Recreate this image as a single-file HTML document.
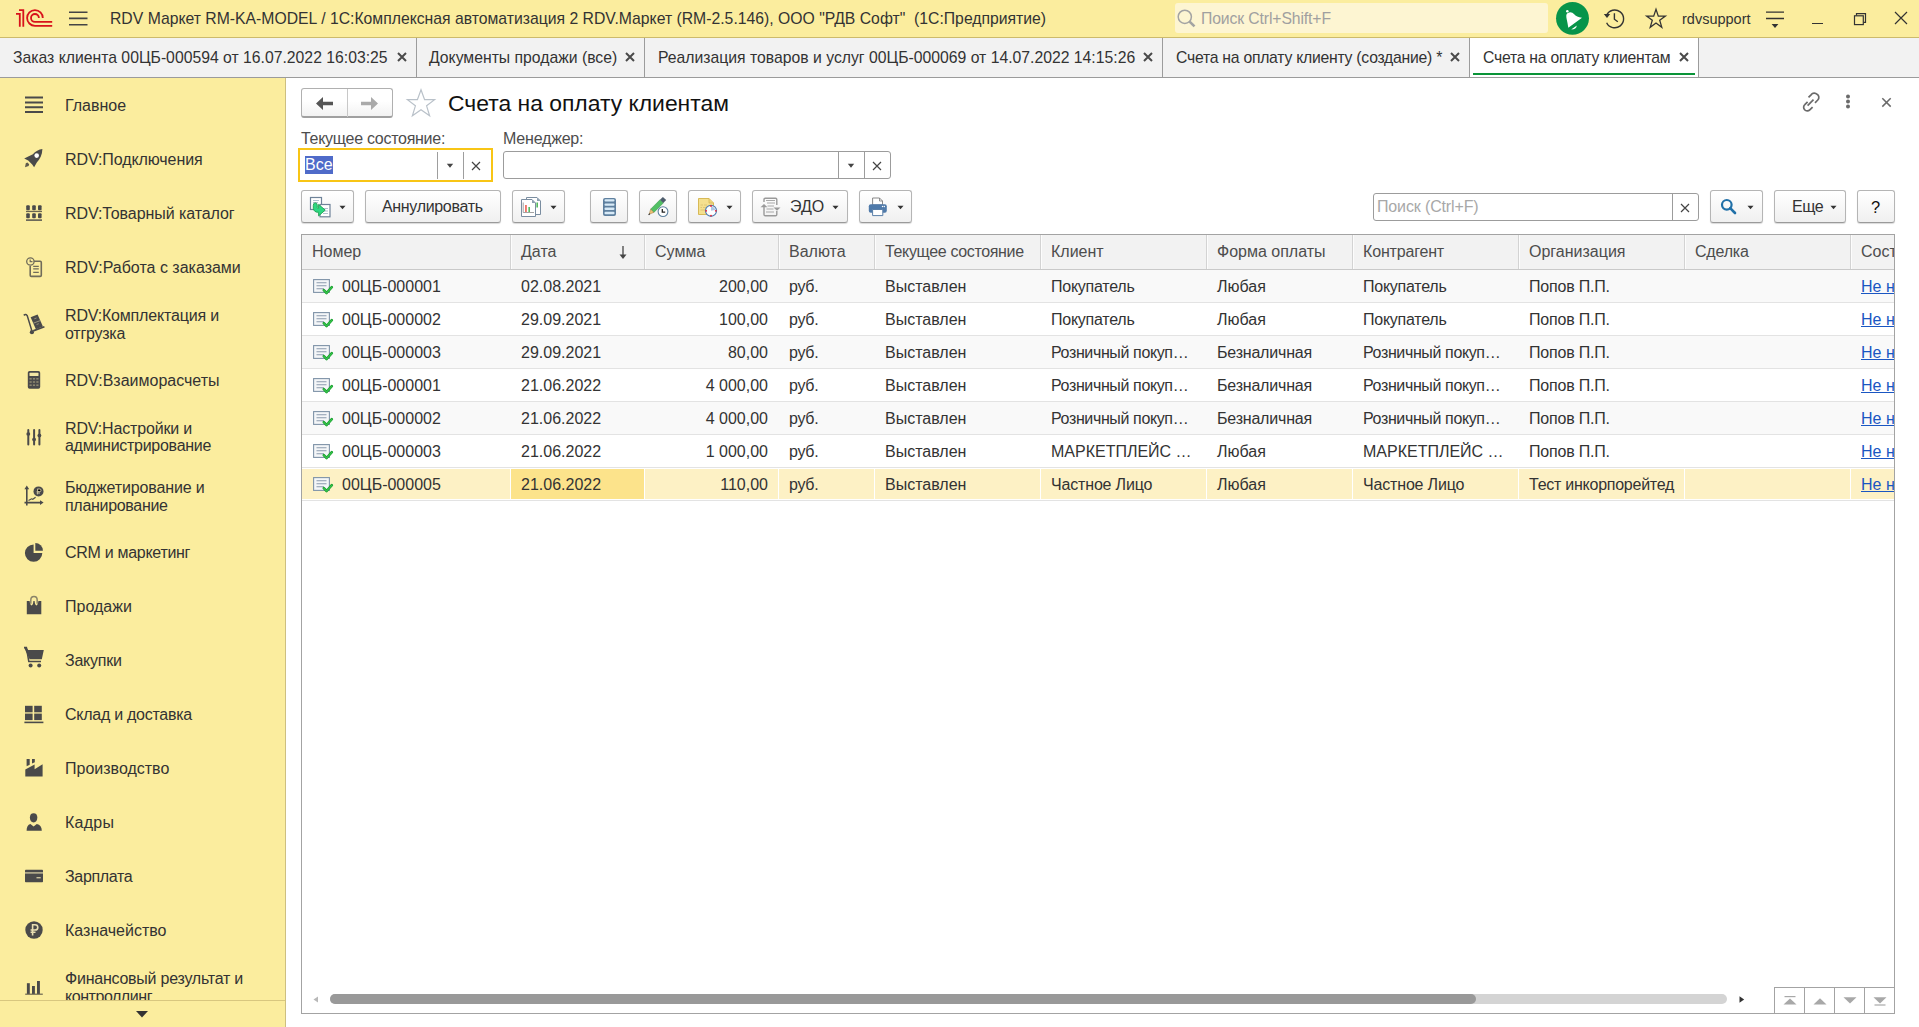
<!DOCTYPE html>
<html><head><meta charset="utf-8">
<style>
*{box-sizing:border-box;margin:0;padding:0}
html,body{width:1919px;height:1027px;overflow:hidden;background:#fff;font-family:"Liberation Sans",sans-serif;color:#333}
.a{position:absolute}
.t{position:absolute;white-space:nowrap;font-size:16px;line-height:18px;height:18px}
#top{left:0;top:0;width:1919px;height:38px;background:#FBED9E;border-bottom:1px solid #CCBA6C}
#tabs{left:0;top:38px;width:1919px;height:40px;background:#F2F2F2;border-bottom:1px solid #9B9B9B}
.tab{position:absolute;top:0;height:39px;border-right:2px solid #9E9E9E}
#side{left:0;top:78px;width:286px;height:949px;background:#FBED9E;border-right:1px solid #CDBF80}
.si{position:absolute;left:65px;font-size:16px;line-height:18px;white-space:nowrap;color:#333}
.ic{position:absolute;left:25px}
.btn{position:absolute;top:190px;height:33px;border:1px solid #B5B5B5;border-bottom-color:#9A9A9A;border-radius:3px;background:linear-gradient(#FFFFFF,#F0F0F0);box-shadow:0 1px 1px rgba(0,0,0,.15)}
.hd{position:absolute;top:235px;height:34px;background:#F2F2F2}
.hs{position:absolute;top:235px;width:1px;height:34px;background:#D6D6D6}
.row{position:absolute;left:302px;width:1592px;height:33px}
</style></head><body>

<!-- TOP BAR -->
<div id="top" class="a">
  <svg class="a" style="left:12px;top:5px" width="45" height="25" viewBox="0 0 45 25" fill="none" stroke="#D8121B" stroke-width="1.8">
    <path d="M7 5.2H11.3V21.8M4 8.9H7.8V21.8"/>
    <path d="M30.8 12.95A7.85 7.85 0 1 0 22.95 20.8H40.2M26.9 12.95A3.95 3.95 0 1 0 22.95 16.9H40.2"/>
  </svg>
  <svg class="a" style="left:69px;top:10px" width="19" height="17" viewBox="0 0 19 17" stroke="#444" stroke-width="1.6">
    <path d="M0 2.3H18.5M0 8.4H18.5M0 14.8H18.5"/>
  </svg>
  <div class="t" style="left:110px;top:10px;font-size:15.75px;color:#333">RDV Маркет RM-KA-MODEL / 1С:Комплексная автоматизация 2 RDV.Маркет (RM-2.5.146), ООО "РДВ Софт"&nbsp; (1С:Предприятие)</div>
</div>

<!-- TABS -->
<div id="tabs" class="a">
<div class="a" style="left:0px;top:0;width:416px;height:39px;background:transparent"></div>
<div class="a" style="left:416px;top:0;width:1px;height:39px;background:#9C9C9C"></div>
<div class="t" style="left:13px;top:11px;font-size:15.75px">Заказ клиента 00ЦБ-000594 от 16.07.2022 16:03:25</div>
<svg class="a" style="left:397px;top:14px" width="10" height="10" viewBox="0 0 10 10" stroke="#4a4a4a" stroke-width="2"><path d="M1 1L9 9M9 1L1 9"/></svg>
<div class="a" style="left:417px;top:0;width:227px;height:39px;background:transparent"></div>
<div class="a" style="left:644px;top:0;width:1px;height:39px;background:#9C9C9C"></div>
<div class="t" style="left:429px;top:11px;font-size:15.75px">Документы продажи (все)</div>
<svg class="a" style="left:625px;top:14px" width="10" height="10" viewBox="0 0 10 10" stroke="#4a4a4a" stroke-width="2"><path d="M1 1L9 9M9 1L1 9"/></svg>
<div class="a" style="left:645px;top:0;width:517px;height:39px;background:transparent"></div>
<div class="a" style="left:1162px;top:0;width:1px;height:39px;background:#9C9C9C"></div>
<div class="t" style="left:658px;top:11px;font-size:15.75px">Реализация товаров и услуг 00ЦБ-000069 от 14.07.2022 14:15:26</div>
<svg class="a" style="left:1143px;top:14px" width="10" height="10" viewBox="0 0 10 10" stroke="#4a4a4a" stroke-width="2"><path d="M1 1L9 9M9 1L1 9"/></svg>
<div class="a" style="left:1163px;top:0;width:306px;height:39px;background:transparent"></div>
<div class="a" style="left:1469px;top:0;width:1px;height:39px;background:#9C9C9C"></div>
<div class="t" style="left:1176px;top:11px;font-size:15.75px;letter-spacing:-0.25px">Счета на оплату клиенту (создание) *</div>
<svg class="a" style="left:1450px;top:14px" width="10" height="10" viewBox="0 0 10 10" stroke="#4a4a4a" stroke-width="2"><path d="M1 1L9 9M9 1L1 9"/></svg>
<div class="a" style="left:1470px;top:0;width:228px;height:39px;background:#fff"></div>
<div class="a" style="left:1698px;top:0;width:1px;height:39px;background:#9C9C9C"></div>
<div class="t" style="left:1483px;top:11px;font-size:15.75px;letter-spacing:-0.25px">Счета на оплату клиентам</div>
<svg class="a" style="left:1679px;top:14px" width="10" height="10" viewBox="0 0 10 10" stroke="#4a4a4a" stroke-width="2"><path d="M1 1L9 9M9 1L1 9"/></svg>
<div class="a" style="left:1473px;top:35px;width:222px;height:2px;background:#0A9438"></div>
</div>

<!-- SIDEBAR -->
<div id="side" class="a">
<div class="a" style="left:0;top:0;width:285px;height:922px;overflow:hidden">
<div class="t" style="left:65px;top:19px">Главное</div>
<div class="t" style="left:65px;top:73px;letter-spacing:-0.086px">RDV:Подключения</div>
<div class="t" style="left:65px;top:127px;letter-spacing:-0.074px">RDV:Товарный каталог</div>
<div class="t" style="left:65px;top:181px">RDV:Работа с заказами</div>
<div class="t" style="left:65px;top:229px;letter-spacing:-0.176px">RDV:Комплектация и</div>
<div class="t" style="left:65px;top:247px;letter-spacing:-0.243px">отгрузка</div>
<div class="t" style="left:65px;top:294px">RDV:Взаиморасчеты</div>
<div class="t" style="left:65px;top:342px;letter-spacing:-0.157px">RDV:Настройки и</div>
<div class="t" style="left:65px;top:359px;letter-spacing:-0.275px">администрирование</div>
<div class="t" style="left:65px;top:401px;letter-spacing:-0.147px">Бюджетирование и</div>
<div class="t" style="left:65px;top:419px;letter-spacing:-0.309px">планирование</div>
<div class="t" style="left:65px;top:466px;letter-spacing:-0.293px">CRM и маркетинг</div>
<div class="t" style="left:65px;top:520px">Продажи</div>
<div class="t" style="left:65px;top:574px;letter-spacing:-0.233px">Закупки</div>
<div class="t" style="left:65px;top:628px;letter-spacing:-0.267px">Склад и доставка</div>
<div class="t" style="left:65px;top:682px">Производство</div>
<div class="t" style="left:65px;top:736px;letter-spacing:0.250px">Кадры</div>
<div class="t" style="left:65px;top:790px;letter-spacing:-0.329px">Зарплата</div>
<div class="t" style="left:65px;top:844px">Казначейство</div>
<div class="t" style="left:65px;top:892px;letter-spacing:-0.238px">Финансовый результат и</div>
<div class="t" style="left:65px;top:910px;letter-spacing:-0.45px">контроллинг</div>
</div>
<div class="a" style="left:0;top:922px;width:285px;height:1px;background:#D8C77F"></div>
<svg class="a" style="left:135px;top:932px" width="14" height="8" viewBox="0 0 14 8"><path d="M1 1H13L7 7.5Z" fill="#333"/></svg>
</div>

<!-- MAIN -->
<div class="a" style="left:301px;top:88px;width:92px;height:30px;border:1px solid #B0B0B0;border-bottom:2px solid #A0A0A0;border-radius:3px;background:linear-gradient(#FFFFFF 0%,#FFFFFF 45%,#F2F2F2 100%)"></div>
<div class="a" style="left:347px;top:89px;width:1px;height:28px;background:#C8C8C8"></div>
<svg class="a" style="left:315px;top:96px" width="19" height="15" viewBox="0 0 19 15"><path d="M1 7.5L8 1V5.8H18V9.2H8V14Z" fill="#555"/></svg>
<svg class="a" style="left:360px;top:96px" width="19" height="15" viewBox="0 0 19 15"><path d="M18 7.5L11 1V5.8H1V9.2H11V14Z" fill="#AAAAAA"/></svg>
<svg class="a" style="left:405px;top:88px" width="32" height="30" viewBox="0 0 32 30"><path d="M16 1.8L19.6 11.6L29.6 11.6L21.6 17.8L24.6 27.8L16 21.7L7.4 27.8L10.4 17.8L2.4 11.6L12.4 11.6Z" fill="none" stroke="#B9C1C9" stroke-width="1.2" stroke-linejoin="miter"/></svg>
<div class="t" style="left:448px;top:90px;font-size:22.9px;line-height:26px;height:26px;color:#111">Счета на оплату клиентам</div>
<svg class="a" style="left:1800px;top:91px" width="23" height="22" viewBox="0 0 23 22" fill="none" stroke="#6A6A6A" stroke-width="1.7" stroke-linecap="butt"><path d="M8.5 6.3L11.3 3.6A3.6 3.6 0 0 1 17 3.3A3.6 3.6 0 0 1 17.8 9L15 11.8"/><path d="M7.6 10.8L4.8 13.6A3.6 3.6 0 0 0 4.6 18.7A3.6 3.6 0 0 0 9.8 18.9L12.6 16.1"/><path d="M7.6 14.6L13.5 8.7"/></svg>
<svg class="a" style="left:1844px;top:93px" width="8" height="17" viewBox="0 0 8 17" fill="#6A6A6A"><circle cx="4" cy="3.4" r="2"/><circle cx="4" cy="8.4" r="2"/><circle cx="4" cy="13.6" r="2"/></svg>
<svg class="a" style="left:1881px;top:97px" width="11" height="11" viewBox="0 0 11 11" stroke="#6A6A6A" stroke-width="1.5"><path d="M1.3 1.2L9.7 9.6M9.7 1.2L1.3 9.6"/></svg>
<div class="t" style="left:301px;top:130px;color:#4D4D4D;letter-spacing:-0.28px">Текущее состояние:</div>
<div class="t" style="left:503px;top:130px;color:#4D4D4D;letter-spacing:-0.2px">Менеджер:</div>
<div class="a" style="left:298px;top:148px;width:195px;height:34px;border:2px solid #F8C515;background:#fff"></div>
<div class="a" style="left:437px;top:152px;width:1px;height:27px;background:#9E9E9E"></div>
<div class="a" style="left:463px;top:152px;width:1px;height:27px;background:#9E9E9E"></div>
<svg class="a" style="left:446px;top:163px" width="8" height="6" viewBox="0 0 8 6"><path d="M0.8 0.8H7.2L4 4.8Z" fill="#444"/></svg>
<svg class="a" style="left:471px;top:161px" width="10" height="10" viewBox="0 0 10 10" stroke="#444" stroke-width="1.2"><path d="M1 1L9 9M9 1L1 9"/></svg>
<div class="a" style="left:305px;top:156px;width:28px;height:18px;background:#4F6BC9"></div>
<div class="t" style="left:305px;top:156px;color:#fff">Все</div>
<div class="a" style="left:503px;top:151px;width:388px;height:28px;border:1px solid #9C9C9C;border-radius:3px;background:#fff"></div>
<div class="a" style="left:838px;top:151px;width:1px;height:28px;background:#9C9C9C"></div>
<div class="a" style="left:864px;top:151px;width:1px;height:28px;background:#9C9C9C"></div>
<svg class="a" style="left:847px;top:163px" width="8" height="6" viewBox="0 0 8 6"><path d="M0.8 0.8H7.2L4 4.8Z" fill="#444"/></svg>
<svg class="a" style="left:872px;top:161px" width="10" height="10" viewBox="0 0 10 10" stroke="#444" stroke-width="1.2"><path d="M1 1L9 9M9 1L1 9"/></svg>
<div class="btn" style="left:301px;width:53px"></div>
<svg class="a" style="left:309px;top:196px" width="23" height="22" viewBox="0 0 23 22"><rect x="1.5" y="1.5" width="11" height="12" fill="#fff" stroke="#6F8399" stroke-width="1.2"/><rect x="11" y="8.5" width="10" height="12.3" fill="#fff" stroke="#6F8399" stroke-width="1.2"/><path d="M4 4.5H10M4 6.5H9M14 12.5H19M14 15H19M14 17.5H19" stroke="#9DB0C4" stroke-width="0.8"/><path d="M4.3 9.3Q4.3 6.9 6.3 6.9Q8.3 6.9 8.3 9.3V11.6Q8.5 12.6 9.6 12.2V8.4L16.2 14.1L9.6 19.9V16.3Q5 16.4 4.3 12.4Z" fill="#2DD882" stroke="#1F9F50" stroke-width="0.9" stroke-linejoin="round"/></svg>
<svg class="a" style="left:339px;top:205px" width="8" height="5" viewBox="0 0 8 5"><path d="M0.5 0.8H6.5L3.5 4.2Z" fill="#333"/></svg>
<div class="btn" style="left:365px;width:136px"></div>
<div class="t" style="left:382px;top:198px;letter-spacing:-0.33px">Аннулировать</div>
<div class="btn" style="left:512px;width:53px"></div>
<svg class="a" style="left:520px;top:196px" width="22" height="22" viewBox="0 0 22 22"><path d="M6.5 1.5H17L20.5 5V18.5H6.5Z" fill="#fff" stroke="#7A8DA0" stroke-width="1"/><path d="M17 1.5V5H20.5Z" fill="#8EA0B2"/><path d="M1.5 3.5H12L15.5 7V20.5H1.5Z" fill="#fff" stroke="#7A8DA0" stroke-width="1"/><path d="M12 3.5V7H15.5Z" fill="#8EA0B2"/><path d="M3.2 6.5V16.5H14" stroke="#999" stroke-width="0.9" fill="none"/><rect x="5.3" y="9" width="1.3" height="7" fill="#E8392A"/><rect x="8.5" y="11" width="1.3" height="5" fill="#2EAA3A"/><rect x="16.5" y="6.5" width="1.3" height="5" fill="#2EAA3A"/></svg>
<svg class="a" style="left:550px;top:205px" width="8" height="5" viewBox="0 0 8 5"><path d="M0.5 0.8H6.5L3.5 4.2Z" fill="#333"/></svg>
<div class="btn" style="left:590px;width:38px"></div>
<svg class="a" style="left:602px;top:197px" width="15" height="20" viewBox="0 0 15 20"><rect x="1" y="1" width="13" height="18" rx="2" fill="#5F809F"/><rect x="2.5" y="2.2" width="10" height="2.4" rx="1" fill="#D8EAF7"/><rect x="2.5" y="6.4" width="10" height="2.4" rx="1" fill="#D8EAF7"/><rect x="2.5" y="10.6" width="10" height="2.4" rx="1" fill="#D8EAF7"/><rect x="2.5" y="14.8" width="10" height="2.4" rx="1" fill="#D8EAF7"/></svg>
<div class="btn" style="left:639px;width:38px"></div>
<svg class="a" style="left:648px;top:196px" width="22" height="22" viewBox="0 0 22 22"><path d="M2.6 13.2L5.9 16.4L15.3 7L12 3.8Z" fill="#52C064" stroke="#2F8A3E" stroke-width="0.5"/><path d="M12 3.8L15.3 7L18.2 4.1L14.9 0.9Z" fill="#4E5D6C"/><path d="M2.6 13.2L5.9 16.4L1.2 18.2Z" fill="#F2C274" stroke="#9A7A46" stroke-width="0.5"/><path d="M0.6 18.9L1.9 17.6" stroke="#333" stroke-width="1.2"/><circle cx="15" cy="15.6" r="4.9" fill="#fff" stroke="#5E819F" stroke-width="1.1"/><path d="M14.3 12.9V16.1H17.2" stroke="#222" stroke-width="1.3" fill="none"/></svg>
<div class="btn" style="left:688px;width:53px"></div>
<svg class="a" style="left:697px;top:197px" width="23" height="21" viewBox="0 0 23 21"><path d="M1.5 1.5H12L16.5 6V17.5H1.5Z" fill="#F4E08E" stroke="#D7B956" stroke-width="1" stroke-linejoin="round"/><path d="M12 1.5V6H16.5" fill="#EED47A" stroke="#D7B956" stroke-width="0.8"/><path d="M3.5 8H6M7 8H10M3.5 10.5H5M6 10.5H9M3.5 13H9" stroke="#D8C070" stroke-width="0.8"/><circle cx="14" cy="13.8" r="5.5" fill="#fff" stroke="#4E7DB2" stroke-width="1.2"/><path d="M14 13.8V9.5A4.3 4.3 0 0 1 18.2 13Z" fill="#AFC6E4"/><circle cx="14" cy="9" r="0.9" fill="#E23"/><circle cx="14" cy="18.6" r="0.9" fill="#E23"/><circle cx="9.2" cy="13.8" r="0.9" fill="#E23"/><circle cx="18.8" cy="13.8" r="0.9" fill="#E23"/></svg>
<svg class="a" style="left:726px;top:205px" width="8" height="5" viewBox="0 0 8 5"><path d="M0.5 0.8H6.5L3.5 4.2Z" fill="#333"/></svg>
<div class="btn" style="left:752px;width:96px"></div>
<svg class="a" style="left:760px;top:197px" width="22" height="20" viewBox="0 0 22 20"><path d="M4 5V2.5Q4 1.2 5.3 1.2H15.5Q16.8 1.2 16.8 2.5V8M16.8 14V17.5Q16.8 18.8 15.5 18.8H5.3Q4 18.8 4 17.5V10" fill="none" stroke="#9A9A9A" stroke-width="1.4"/><path d="M6 3.5H15M7 6H15M7.5 9H14M6.5 12H13.5M6 15H14" stroke="#A8A8A8" stroke-width="1.2"/><path d="M0.5 10.2L4 7L7.5 10.2Z" fill="#9A9A9A"/><path d="M13.5 10.5L17 13.8L20.5 10.5Z" fill="#9A9A9A"/></svg>
<div class="t" style="left:790px;top:198px">ЭДО</div>
<svg class="a" style="left:832px;top:205px" width="8" height="5" viewBox="0 0 8 5"><path d="M0.5 0.8H6.5L3.5 4.2Z" fill="#333"/></svg>
<div class="btn" style="left:859px;width:53px"></div>
<svg class="a" style="left:868px;top:197px" width="20" height="20" viewBox="0 0 20 20"><path d="M4.6 1H11.5L14.5 4V8H4.6Z" fill="#fff" stroke="#7A7A7A" stroke-width="0.9"/><path d="M11.5 1V4H14.5" fill="none" stroke="#7A7A7A" stroke-width="0.8"/><rect x="0.8" y="7.2" width="18" height="8.6" rx="2" fill="#4F7AAA"/><path d="M4.6 12.5H14.8V18.6H4.6Z" fill="#fff" stroke="#5A7FA8" stroke-width="1"/><circle cx="14.5" cy="9.5" r="0.7" fill="#fff"/><circle cx="16.3" cy="9.5" r="0.7" fill="#fff"/></svg>
<svg class="a" style="left:897px;top:205px" width="8" height="5" viewBox="0 0 8 5"><path d="M0.5 0.8H6.5L3.5 4.2Z" fill="#333"/></svg>
<div class="a" style="left:1373px;top:193px;width:326px;height:28px;border:1px solid #9C9C9C;border-radius:3px;background:#fff"></div>
<div class="a" style="left:1672px;top:193px;width:1px;height:28px;background:#9C9C9C"></div>
<svg class="a" style="left:1680px;top:203px" width="10" height="10" viewBox="0 0 10 10" stroke="#444" stroke-width="1.2"><path d="M1 1L9 9M9 1L1 9"/></svg>
<div class="t" style="left:1377px;top:198px;color:#A8A8A8;letter-spacing:-0.14px">Поиск (Ctrl+F)</div>
<div class="btn" style="left:1710px;width:53px"></div>
<svg class="a" style="left:1720px;top:198px" width="17" height="17" viewBox="0 0 17 17"><circle cx="6.8" cy="6.8" r="4.8" fill="none" stroke="#2070A8" stroke-width="2.2"/><path d="M10.2 10.2L15 15" stroke="#2070A8" stroke-width="2.6" stroke-linecap="round"/></svg>
<svg class="a" style="left:1747px;top:205px" width="8" height="5" viewBox="0 0 8 5"><path d="M0.5 0.8H6.5L3.5 4.2Z" fill="#333"/></svg>
<div class="btn" style="left:1774px;width:72px"></div>
<div class="t" style="left:1792px;top:198px;letter-spacing:-0.5px">Еще</div>
<svg class="a" style="left:1830px;top:205px" width="8" height="5" viewBox="0 0 8 5"><path d="M0.5 0.8H6.5L3.5 4.2Z" fill="#333"/></svg>
<div class="btn" style="left:1857px;width:38px"></div>
<div class="t" style="left:1871px;top:198px;color:#111;font-size:16.5px">?</div>
<!-- /MAIN -->
<!-- TABLE -->
<div class="a" style="left:301px;top:234px;width:1594px;height:780px;border:1px solid #A3A3A3;background:#fff"></div>
<div class="a" style="left:302px;top:235px;width:1592px;height:34px;background:#F2F2F2;overflow:hidden">
<div class="a" style="left:208px;top:0;width:1px;height:34px;background:#D3D3D3"></div>
<div class="a" style="left:209px;top:0;width:1px;height:34px;background:#FCFCFC"></div>
<div class="a" style="left:342px;top:0;width:1px;height:34px;background:#D3D3D3"></div>
<div class="a" style="left:343px;top:0;width:1px;height:34px;background:#FCFCFC"></div>
<div class="a" style="left:476px;top:0;width:1px;height:34px;background:#D3D3D3"></div>
<div class="a" style="left:477px;top:0;width:1px;height:34px;background:#FCFCFC"></div>
<div class="a" style="left:572px;top:0;width:1px;height:34px;background:#D3D3D3"></div>
<div class="a" style="left:573px;top:0;width:1px;height:34px;background:#FCFCFC"></div>
<div class="a" style="left:738px;top:0;width:1px;height:34px;background:#D3D3D3"></div>
<div class="a" style="left:739px;top:0;width:1px;height:34px;background:#FCFCFC"></div>
<div class="a" style="left:904px;top:0;width:1px;height:34px;background:#D3D3D3"></div>
<div class="a" style="left:905px;top:0;width:1px;height:34px;background:#FCFCFC"></div>
<div class="a" style="left:1050px;top:0;width:1px;height:34px;background:#D3D3D3"></div>
<div class="a" style="left:1051px;top:0;width:1px;height:34px;background:#FCFCFC"></div>
<div class="a" style="left:1216px;top:0;width:1px;height:34px;background:#D3D3D3"></div>
<div class="a" style="left:1217px;top:0;width:1px;height:34px;background:#FCFCFC"></div>
<div class="a" style="left:1382px;top:0;width:1px;height:34px;background:#D3D3D3"></div>
<div class="a" style="left:1383px;top:0;width:1px;height:34px;background:#FCFCFC"></div>
<div class="a" style="left:1548px;top:0;width:1px;height:34px;background:#D3D3D3"></div>
<div class="a" style="left:1549px;top:0;width:1px;height:34px;background:#FCFCFC"></div>
<div class="t" style="left:10px;top:8px;color:#4D4D4D">Номер</div>
<div class="t" style="left:219px;top:8px;color:#4D4D4D">Дата</div>
<div class="t" style="left:353px;top:8px;color:#4D4D4D">Сумма</div>
<div class="t" style="left:487px;top:8px;color:#4D4D4D">Валюта</div>
<div class="t" style="left:583px;top:8px;color:#4D4D4D;letter-spacing:-0.35px">Текущее состояние</div>
<div class="t" style="left:749px;top:8px;color:#4D4D4D">Клиент</div>
<div class="t" style="left:915px;top:8px;color:#4D4D4D">Форма оплаты</div>
<div class="t" style="left:1061px;top:8px;color:#4D4D4D;letter-spacing:-0.17px">Контрагент</div>
<div class="t" style="left:1227px;top:8px;color:#4D4D4D">Организация</div>
<div class="t" style="left:1393px;top:8px;color:#4D4D4D;letter-spacing:-0.2px">Сделка</div>
<div class="t" style="left:1559px;top:8px;color:#4D4D4D">Состояние</div>
</div>
<svg class="a" style="left:618px;top:245px" width="10" height="15" viewBox="0 0 10 15"><path d="M5 1V11" stroke="#444" stroke-width="1.3"/><path d="M1.5 9.5H8.5L5 14Z" fill="#444"/></svg>
<div class="a" style="left:302px;top:269px;width:1592px;height:1px;background:#C9C9C9"></div>
<div class="a" style="left:302px;top:270px;width:1592px;height:32px;background:#F9F9F9"></div>
<div class="a" style="left:302px;top:302px;width:1592px;height:1px;background:#E3E3E3"></div>
<svg class="a" style="left:313px;top:279px" width="21" height="17" viewBox="0 0 21 17"><rect x="0.6" y="0.6" width="15.8" height="12.8" fill="#F4F6F8" stroke="#7F93A8" stroke-width="1.1"/><path d="M3.5 3.8H13.5M3.5 6.8H13.5M3.5 9.8H11" stroke="#8A9BAD" stroke-width="1.1"/><path d="M10.8 11.2L13.6 14L18.8 8.2" fill="none" stroke="#159A2A" stroke-width="2.6" stroke-linecap="round" stroke-linejoin="round"/><path d="M10.8 11.2L13.6 14L18.8 8.2" fill="none" stroke="#35C24A" stroke-width="1.3" stroke-linecap="round" stroke-linejoin="round"/></svg>
<div class="t" style="left:342px;top:278px">00ЦБ-000001</div>
<div class="t" style="left:521px;top:278px">02.08.2021</div>
<div class="t" style="left:645px;width:123px;top:278px;text-align:right">200,00</div>
<div class="t" style="left:789px;top:278px;letter-spacing:-0.3px">руб.</div>
<div class="t" style="left:885px;top:278px">Выставлен</div>
<div class="t" style="left:1051px;top:278px;letter-spacing:-0.25px">Покупатель</div>
<div class="t" style="left:1217px;top:278px">Любая</div>
<div class="t" style="left:1363px;top:278px;letter-spacing:-0.25px">Покупатель</div>
<div class="t" style="left:1529px;top:278px;letter-spacing:-0.2px">Попов П.П.</div>
<div class="a" style="left:1851px;top:270px;width:43px;height:32px;overflow:hidden"><div class="t" style="left:10px;top:8px;color:#1A56C2;text-decoration:underline">Не начата</div></div>
<div class="a" style="left:302px;top:303px;width:1592px;height:32px;background:#FFFFFF"></div>
<div class="a" style="left:302px;top:335px;width:1592px;height:1px;background:#E3E3E3"></div>
<svg class="a" style="left:313px;top:312px" width="21" height="17" viewBox="0 0 21 17"><rect x="0.6" y="0.6" width="15.8" height="12.8" fill="#F4F6F8" stroke="#7F93A8" stroke-width="1.1"/><path d="M3.5 3.8H13.5M3.5 6.8H13.5M3.5 9.8H11" stroke="#8A9BAD" stroke-width="1.1"/><path d="M10.8 11.2L13.6 14L18.8 8.2" fill="none" stroke="#159A2A" stroke-width="2.6" stroke-linecap="round" stroke-linejoin="round"/><path d="M10.8 11.2L13.6 14L18.8 8.2" fill="none" stroke="#35C24A" stroke-width="1.3" stroke-linecap="round" stroke-linejoin="round"/></svg>
<div class="t" style="left:342px;top:311px">00ЦБ-000002</div>
<div class="t" style="left:521px;top:311px">29.09.2021</div>
<div class="t" style="left:645px;width:123px;top:311px;text-align:right">100,00</div>
<div class="t" style="left:789px;top:311px;letter-spacing:-0.3px">руб.</div>
<div class="t" style="left:885px;top:311px">Выставлен</div>
<div class="t" style="left:1051px;top:311px;letter-spacing:-0.25px">Покупатель</div>
<div class="t" style="left:1217px;top:311px">Любая</div>
<div class="t" style="left:1363px;top:311px;letter-spacing:-0.25px">Покупатель</div>
<div class="t" style="left:1529px;top:311px;letter-spacing:-0.2px">Попов П.П.</div>
<div class="a" style="left:1851px;top:303px;width:43px;height:32px;overflow:hidden"><div class="t" style="left:10px;top:8px;color:#1A56C2;text-decoration:underline">Не начата</div></div>
<div class="a" style="left:302px;top:336px;width:1592px;height:32px;background:#F9F9F9"></div>
<div class="a" style="left:302px;top:368px;width:1592px;height:1px;background:#E3E3E3"></div>
<svg class="a" style="left:313px;top:345px" width="21" height="17" viewBox="0 0 21 17"><rect x="0.6" y="0.6" width="15.8" height="12.8" fill="#F4F6F8" stroke="#7F93A8" stroke-width="1.1"/><path d="M3.5 3.8H13.5M3.5 6.8H13.5M3.5 9.8H11" stroke="#8A9BAD" stroke-width="1.1"/><path d="M10.8 11.2L13.6 14L18.8 8.2" fill="none" stroke="#159A2A" stroke-width="2.6" stroke-linecap="round" stroke-linejoin="round"/><path d="M10.8 11.2L13.6 14L18.8 8.2" fill="none" stroke="#35C24A" stroke-width="1.3" stroke-linecap="round" stroke-linejoin="round"/></svg>
<div class="t" style="left:342px;top:344px">00ЦБ-000003</div>
<div class="t" style="left:521px;top:344px">29.09.2021</div>
<div class="t" style="left:645px;width:123px;top:344px;text-align:right">80,00</div>
<div class="t" style="left:789px;top:344px;letter-spacing:-0.3px">руб.</div>
<div class="t" style="left:885px;top:344px">Выставлен</div>
<div class="t" style="left:1051px;top:344px;letter-spacing:-0.375px">Розничный покуп…</div>
<div class="t" style="left:1217px;top:344px;letter-spacing:-0.2px">Безналичная</div>
<div class="t" style="left:1363px;top:344px;letter-spacing:-0.375px">Розничный покуп…</div>
<div class="t" style="left:1529px;top:344px;letter-spacing:-0.2px">Попов П.П.</div>
<div class="a" style="left:1851px;top:336px;width:43px;height:32px;overflow:hidden"><div class="t" style="left:10px;top:8px;color:#1A56C2;text-decoration:underline">Не начата</div></div>
<div class="a" style="left:302px;top:369px;width:1592px;height:32px;background:#FFFFFF"></div>
<div class="a" style="left:302px;top:401px;width:1592px;height:1px;background:#E3E3E3"></div>
<svg class="a" style="left:313px;top:378px" width="21" height="17" viewBox="0 0 21 17"><rect x="0.6" y="0.6" width="15.8" height="12.8" fill="#F4F6F8" stroke="#7F93A8" stroke-width="1.1"/><path d="M3.5 3.8H13.5M3.5 6.8H13.5M3.5 9.8H11" stroke="#8A9BAD" stroke-width="1.1"/><path d="M10.8 11.2L13.6 14L18.8 8.2" fill="none" stroke="#159A2A" stroke-width="2.6" stroke-linecap="round" stroke-linejoin="round"/><path d="M10.8 11.2L13.6 14L18.8 8.2" fill="none" stroke="#35C24A" stroke-width="1.3" stroke-linecap="round" stroke-linejoin="round"/></svg>
<div class="t" style="left:342px;top:377px">00ЦБ-000001</div>
<div class="t" style="left:521px;top:377px">21.06.2022</div>
<div class="t" style="left:645px;width:123px;top:377px;text-align:right">4 000,00</div>
<div class="t" style="left:789px;top:377px;letter-spacing:-0.3px">руб.</div>
<div class="t" style="left:885px;top:377px">Выставлен</div>
<div class="t" style="left:1051px;top:377px;letter-spacing:-0.375px">Розничный покуп…</div>
<div class="t" style="left:1217px;top:377px;letter-spacing:-0.2px">Безналичная</div>
<div class="t" style="left:1363px;top:377px;letter-spacing:-0.375px">Розничный покуп…</div>
<div class="t" style="left:1529px;top:377px;letter-spacing:-0.2px">Попов П.П.</div>
<div class="a" style="left:1851px;top:369px;width:43px;height:32px;overflow:hidden"><div class="t" style="left:10px;top:8px;color:#1A56C2;text-decoration:underline">Не начата</div></div>
<div class="a" style="left:302px;top:402px;width:1592px;height:32px;background:#F9F9F9"></div>
<div class="a" style="left:302px;top:434px;width:1592px;height:1px;background:#E3E3E3"></div>
<svg class="a" style="left:313px;top:411px" width="21" height="17" viewBox="0 0 21 17"><rect x="0.6" y="0.6" width="15.8" height="12.8" fill="#F4F6F8" stroke="#7F93A8" stroke-width="1.1"/><path d="M3.5 3.8H13.5M3.5 6.8H13.5M3.5 9.8H11" stroke="#8A9BAD" stroke-width="1.1"/><path d="M10.8 11.2L13.6 14L18.8 8.2" fill="none" stroke="#159A2A" stroke-width="2.6" stroke-linecap="round" stroke-linejoin="round"/><path d="M10.8 11.2L13.6 14L18.8 8.2" fill="none" stroke="#35C24A" stroke-width="1.3" stroke-linecap="round" stroke-linejoin="round"/></svg>
<div class="t" style="left:342px;top:410px">00ЦБ-000002</div>
<div class="t" style="left:521px;top:410px">21.06.2022</div>
<div class="t" style="left:645px;width:123px;top:410px;text-align:right">4 000,00</div>
<div class="t" style="left:789px;top:410px;letter-spacing:-0.3px">руб.</div>
<div class="t" style="left:885px;top:410px">Выставлен</div>
<div class="t" style="left:1051px;top:410px;letter-spacing:-0.375px">Розничный покуп…</div>
<div class="t" style="left:1217px;top:410px;letter-spacing:-0.2px">Безналичная</div>
<div class="t" style="left:1363px;top:410px;letter-spacing:-0.375px">Розничный покуп…</div>
<div class="t" style="left:1529px;top:410px;letter-spacing:-0.2px">Попов П.П.</div>
<div class="a" style="left:1851px;top:402px;width:43px;height:32px;overflow:hidden"><div class="t" style="left:10px;top:8px;color:#1A56C2;text-decoration:underline">Не начата</div></div>
<div class="a" style="left:302px;top:435px;width:1592px;height:32px;background:#FFFFFF"></div>
<div class="a" style="left:302px;top:467px;width:1592px;height:1px;background:#E3E3E3"></div>
<svg class="a" style="left:313px;top:444px" width="21" height="17" viewBox="0 0 21 17"><rect x="0.6" y="0.6" width="15.8" height="12.8" fill="#F4F6F8" stroke="#7F93A8" stroke-width="1.1"/><path d="M3.5 3.8H13.5M3.5 6.8H13.5M3.5 9.8H11" stroke="#8A9BAD" stroke-width="1.1"/><path d="M10.8 11.2L13.6 14L18.8 8.2" fill="none" stroke="#159A2A" stroke-width="2.6" stroke-linecap="round" stroke-linejoin="round"/><path d="M10.8 11.2L13.6 14L18.8 8.2" fill="none" stroke="#35C24A" stroke-width="1.3" stroke-linecap="round" stroke-linejoin="round"/></svg>
<div class="t" style="left:342px;top:443px">00ЦБ-000003</div>
<div class="t" style="left:521px;top:443px">21.06.2022</div>
<div class="t" style="left:645px;width:123px;top:443px;text-align:right">1 000,00</div>
<div class="t" style="left:789px;top:443px;letter-spacing:-0.3px">руб.</div>
<div class="t" style="left:885px;top:443px">Выставлен</div>
<div class="t" style="left:1051px;top:443px">МАРКЕТПЛЕЙС …</div>
<div class="t" style="left:1217px;top:443px">Любая</div>
<div class="t" style="left:1363px;top:443px">МАРКЕТПЛЕЙС …</div>
<div class="t" style="left:1529px;top:443px;letter-spacing:-0.2px">Попов П.П.</div>
<div class="a" style="left:1851px;top:435px;width:43px;height:32px;overflow:hidden"><div class="t" style="left:10px;top:8px;color:#1A56C2;text-decoration:underline">Не начата</div></div>
<div class="a" style="left:302px;top:469px;width:1592px;height:30px;background:#FDF1C5"></div>
<div class="a" style="left:510px;top:468px;width:1px;height:32px;background:#fff"></div>
<div class="a" style="left:644px;top:468px;width:1px;height:32px;background:#fff"></div>
<div class="a" style="left:778px;top:468px;width:1px;height:32px;background:#fff"></div>
<div class="a" style="left:874px;top:468px;width:1px;height:32px;background:#fff"></div>
<div class="a" style="left:1040px;top:468px;width:1px;height:32px;background:#fff"></div>
<div class="a" style="left:1206px;top:468px;width:1px;height:32px;background:#fff"></div>
<div class="a" style="left:1352px;top:468px;width:1px;height:32px;background:#fff"></div>
<div class="a" style="left:1518px;top:468px;width:1px;height:32px;background:#fff"></div>
<div class="a" style="left:1684px;top:468px;width:1px;height:32px;background:#fff"></div>
<div class="a" style="left:1850px;top:468px;width:1px;height:32px;background:#fff"></div>
<div class="a" style="left:511px;top:469px;width:133px;height:30px;background:#FCE38B"></div>
<div class="a" style="left:302px;top:500px;width:1592px;height:1px;background:#E3E3E3"></div>
<svg class="a" style="left:313px;top:477px" width="21" height="17" viewBox="0 0 21 17"><rect x="0.6" y="0.6" width="15.8" height="12.8" fill="#F4F6F8" stroke="#7F93A8" stroke-width="1.1"/><path d="M3.5 3.8H13.5M3.5 6.8H13.5M3.5 9.8H11" stroke="#8A9BAD" stroke-width="1.1"/><path d="M10.8 11.2L13.6 14L18.8 8.2" fill="none" stroke="#159A2A" stroke-width="2.6" stroke-linecap="round" stroke-linejoin="round"/><path d="M10.8 11.2L13.6 14L18.8 8.2" fill="none" stroke="#35C24A" stroke-width="1.3" stroke-linecap="round" stroke-linejoin="round"/></svg>
<div class="t" style="left:342px;top:476px">00ЦБ-000005</div>
<div class="t" style="left:521px;top:476px">21.06.2022</div>
<div class="t" style="left:645px;width:123px;top:476px;text-align:right">110,00</div>
<div class="t" style="left:789px;top:476px;letter-spacing:-0.3px">руб.</div>
<div class="t" style="left:885px;top:476px">Выставлен</div>
<div class="t" style="left:1051px;top:476px;letter-spacing:-0.17px">Частное Лицо</div>
<div class="t" style="left:1217px;top:476px">Любая</div>
<div class="t" style="left:1363px;top:476px;letter-spacing:-0.17px">Частное Лицо</div>
<div class="t" style="left:1529px;top:476px;letter-spacing:-0.25px">Тест инкорпорейтед</div>
<div class="a" style="left:1851px;top:468px;width:43px;height:32px;overflow:hidden"><div class="t" style="left:10px;top:8px;color:#1A56C2;text-decoration:underline">Не начата</div></div>
<svg class="a" style="left:312px;top:995px" width="8" height="9" viewBox="0 0 8 9"><path d="M1.5 4.5L6 1.5V7.5Z" fill="#B8B8B8"/></svg>
<div class="a" style="left:330px;top:994px;width:1397px;height:10px;border-radius:5px;background:#D4D4D4"></div>
<div class="a" style="left:330px;top:994px;width:1146px;height:10px;border-radius:5px;background:#999999"></div>
<svg class="a" style="left:1738px;top:995px" width="8" height="9" viewBox="0 0 8 9"><path d="M6.2 4.5L1.5 1.2V7.8Z" fill="#333"/></svg>
<div class="a" style="left:1774px;top:987px;width:121px;height:27px;border:1px solid #A3A3A3;background:#fff"></div>
<div class="a" style="left:1804px;top:987px;width:1px;height:27px;background:#A3A3A3"></div>
<div class="a" style="left:1834px;top:987px;width:1px;height:27px;background:#A3A3A3"></div>
<div class="a" style="left:1864px;top:987px;width:1px;height:27px;background:#A3A3A3"></div>
<svg class="a" style="left:1782px;top:995px" width="16" height="11" viewBox="0 0 16 11"><path d="M2.5 1.6H13.5" stroke="#A8A8A8" stroke-width="1.2"/><path d="M1.5 9.6H14.5L8 3.4Z" fill="#A8A8A8"/></svg>
<svg class="a" style="left:1812px;top:995px" width="16" height="11" viewBox="0 0 16 11"><path d="M1.5 9.6H14.5L8 3.2Z" fill="#A8A8A8"/></svg>
<svg class="a" style="left:1842px;top:995px" width="16" height="11" viewBox="0 0 16 11"><path d="M1.5 2.2H14.5L8 8.6Z" fill="#A8A8A8"/></svg>
<svg class="a" style="left:1872px;top:995px" width="16" height="11" viewBox="0 0 16 11"><path d="M1.5 2.2H14.5L8 8.4Z" fill="#A8A8A8"/><path d="M2.5 10H13.5" stroke="#A8A8A8" stroke-width="1.2"/></svg>
<!-- /TABLE -->
<!-- ICONS -->
<svg class="a" style="left:24px;top:95px" width="20" height="20" viewBox="0 0 20 20"><path d="M1 2.5H19M1 7.4H19M1 12.3H19M1 17.1H19" stroke="#4A4A4A" stroke-width="2"/></svg>
<svg class="a" style="left:22px;top:145px" width="24" height="24" viewBox="0 0 24 24"><path d="M20.4 4.1C17 4.4 13.2 6.6 10.9 9.3L2.2 13.4L6.2 15.4L10.2 19.6L12.1 22.3L14.8 17.4C18 14.4 20.2 10 20.4 4.1Z" fill="#4A4A4A"/><circle cx="14.7" cy="10.6" r="2.3" fill="#fff"/><path d="M3 22.3L3.8 18.2L5.4 17.4L7.2 19.2L6.6 20.9Z" fill="#5E5A4C"/></svg>
<svg class="a" style="left:24px;top:203px" width="20" height="20" viewBox="0 0 20 20"><g fill="#4A4A4A"><rect x="2.2" y="2.2" width="3.6" height="5" rx="1"/><rect x="8.2" y="2.2" width="3.6" height="5" rx="1"/><rect x="14" y="2.2" width="3.6" height="5" rx="1"/><rect x="2.2" y="10.2" width="3.6" height="5" rx="1"/><rect x="8.2" y="10.2" width="3.6" height="5" rx="1"/><rect x="14" y="10.2" width="3.6" height="5" rx="1"/><rect x="2" y="7.8" width="16" height="1.3" fill="#6A6550"/><rect x="2" y="16.4" width="16" height="1.4"/></g></svg>
<svg class="a" style="left:22px;top:255px" width="24" height="24" viewBox="0 0 24 24"><g fill="none" stroke="#706C5A"><circle cx="8.4" cy="6.5" r="3.7" stroke-width="1.3"/><path d="M8.2 4.6V6.6H10.5" stroke-width="1.2"/><path d="M11.8 6.3H18.2Q19.3 6.3 19.3 7.4V20.3Q19.3 21.4 18.2 21.4H9.3Q8.2 21.4 8.2 20.3V11" stroke-width="1.6"/><path d="M11.2 11.4H16.8M11.2 13.9H16.8M11.2 17.3H16.8" stroke-width="1.3"/></g></svg>
<svg class="a" style="left:22px;top:312px" width="24" height="24" viewBox="0 0 24 24"><g fill="none" stroke="#4A4A4A" stroke-width="1.5"><path d="M1.8 3.4Q3.6 1.6 5.2 3.6L9.8 18.6"/></g><circle cx="9.9" cy="20.2" r="2.1" fill="#4A4A4A"/><path d="M8.6 5.2L15.6 2.6L20.9 14.6L13.9 17.2Z" fill="#4A4A4A"/><path d="M11.3 11.2L18.3 8.6" stroke="#A59F82" stroke-width="0.9"/><path d="M12.3 6.8L14.5 6M14.6 12.5L16.8 11.7" stroke="#A59F82" stroke-width="0.8"/><path d="M11.2 18.9L22.4 14.8" stroke="#4A4A4A" stroke-width="1.7"/></svg>
<svg class="a" style="left:27px;top:370px" width="14" height="20" viewBox="0 0 14 20"><rect x="0.8" y="1" width="12.4" height="17.8" rx="1.8" fill="#4A4A4A"/><rect x="2.5" y="2.8" width="9" height="3.2" rx="0.6" fill="#F3E7A5"/><g fill="#8C876F"><rect x="2.5" y="8" width="2.2" height="1.6"/><rect x="5.9" y="8" width="2.2" height="1.6"/><rect x="9.3" y="8" width="2.2" height="1.6"/><rect x="2.5" y="11.2" width="2.2" height="1.6"/><rect x="5.9" y="11.2" width="2.2" height="1.6"/><rect x="9.3" y="11.2" width="2.2" height="1.6"/><rect x="2.5" y="14.4" width="2.2" height="1.6"/><rect x="5.9" y="14.4" width="2.2" height="1.6"/><rect x="9.3" y="14.4" width="2.2" height="1.6"/></g></svg>
<svg class="a" style="left:24px;top:426px" width="20" height="22" viewBox="0 0 20 22"><g stroke="#4A4A4A" stroke-width="2" stroke-linecap="round"><path d="M4.3 4V6M4.3 10V18.5M10.1 4V11.5M10.1 15.5V18.5M15.4 4V7.5M15.4 11.5V18.5"/></g><g fill="#4A4A4A"><circle cx="4.3" cy="8" r="1.9"/><circle cx="10.1" cy="13.5" r="1.9"/><circle cx="15.4" cy="9.5" r="1.9"/></g></svg>
<svg class="a" style="left:22px;top:484px" width="24" height="24" viewBox="0 0 24 24"><g stroke="#4A4A4A" stroke-width="1.6" fill="none"><path d="M4.8 4V21.5M2.5 18.6H19"/><path d="M6.5 16.5L9.5 14.8L10.8 15.3L13.6 13.2" stroke-width="1.1"/></g><path d="M4.8 1.6L2.4 5.2H7.2Z M21.6 18.6L18 16.2V21Z" fill="#4A4A4A"/><circle cx="16.5" cy="7.4" r="5" fill="#4A4A4A"/><path d="M15.6 4.8V10.4M15.6 5H17.8Q19 5 19 6.3Q19 7.6 17.8 7.6H14.6M14.6 9H18" stroke="#C9C09A" stroke-width="1"/></svg>
<svg class="a" style="left:22px;top:540px" width="24" height="24" viewBox="0 0 24 24"><path d="M11.6 4.4A8.7 8.7 0 1 0 20.3 13.1H11.6Z" fill="#4A4A4A"/><path d="M13.3 3.1A7.6 7.6 0 0 1 20.9 10.7H13.3Z" fill="#4A4A4A"/></svg>
<svg class="a" style="left:22px;top:593px" width="24" height="24" viewBox="0 0 24 24"><path d="M4.8 8.1H7.6Q8.2 12.4 9.6 12.4Q11 12.4 11.4 8.1H12.6Q13 12.4 14.4 12.4Q15.8 12.4 16.4 8.1H19.3V21.3H4.8Z" fill="#4A4A4A"/><path d="M8.8 10.8V7.2Q8.8 3.6 12 3.6Q15.2 3.6 15.2 7.2V10.8" fill="none" stroke="#8A8468" stroke-width="1.5"/></svg>
<svg class="a" style="left:22px;top:645px" width="24" height="24" viewBox="0 0 24 24"><path d="M2 2.6H4.5L6.2 5H21.8L19.8 14.2H7.6Z" fill="#4A4A4A"/><path d="M2 2.6H4.4L6.8 16.5H19" fill="none" stroke="#4A4A4A" stroke-width="1.5"/><circle cx="8.6" cy="20.6" r="2" fill="#4A4A4A"/><circle cx="17.2" cy="20.6" r="2" fill="#4A4A4A"/></svg>
<svg class="a" style="left:22px;top:703px" width="24" height="24" viewBox="0 0 24 24"><g fill="#4A4A4A"><rect x="3" y="2.8" width="7.6" height="6.5"/><rect x="12.2" y="2.8" width="7.6" height="6.5"/><rect x="3" y="10.6" width="7.6" height="6.5"/><rect x="12.2" y="10.6" width="7.6" height="6.5"/><rect x="2.4" y="18.6" width="19" height="1.6"/></g></svg>
<svg class="a" style="left:22px;top:756px" width="24" height="24" viewBox="0 0 24 24"><path d="M3.3 20.6V13.4L12.6 8.6V13.2L20.6 8.2V20.6Z" fill="#4A4A4A"/><path d="M4.6 3H7.7V8.8L4.6 10.3Z" fill="#4A4A4A"/><path d="M10 3H12.8V6.2L10 7.6Z" fill="#4A4A4A"/></svg>
<svg class="a" style="left:22px;top:811px" width="24" height="24" viewBox="0 0 24 24"><path d="M11.6 2.2Q15.3 2.2 15.3 6.6Q15.3 11 11.6 11.6Q7.9 11 7.9 6.6Q7.9 2.2 11.6 2.2Z" fill="#4A4A4A"/><path d="M4.6 19.8Q4.6 14 8.4 13L11.6 15.4L14.8 13Q19.8 14 19.8 19.8Z" fill="#4A4A4A"/></svg>
<svg class="a" style="left:22px;top:867px" width="24" height="18" viewBox="0 0 24 18"><rect x="3" y="2.8" width="18" height="12.4" rx="0.8" fill="#4A4A4A"/><rect x="3" y="5.2" width="18" height="1.4" fill="#C9C09A"/><rect x="14.5" y="10" width="4.2" height="1.4" fill="#C9C09A"/></svg>
<svg class="a" style="left:22px;top:918px" width="24" height="24" viewBox="0 0 24 24"><circle cx="12" cy="12" r="8.7" fill="#4A4A4A"/><path d="M10.6 17.6V6.8H13Q15.8 6.8 15.8 9.4Q15.8 12 13 12H8.6M8.6 14.3H13.5" fill="none" stroke="#E9DFB2" stroke-width="1.6"/></svg>
<svg class="a" style="left:22px;top:975px" width="24" height="24" viewBox="0 0 24 24"><g fill="#4A4A4A"><rect x="4.9" y="8.2" width="2.9" height="10.8"/><rect x="10" y="11" width="2.9" height="8"/><rect x="15" y="6" width="2.9" height="13"/><rect x="3.2" y="18.6" width="17.6" height="1.2" fill="#6A6550"/></g></svg>
<div class="a" style="left:1175px;top:3px;width:373px;height:30px;border-radius:3px;background:#FDF5D2"></div>
<svg class="a" style="left:1176px;top:8px" width="22" height="22" viewBox="0 0 22 22"><circle cx="8.8" cy="8.8" r="6.6" fill="none" stroke="#A3A3A3" stroke-width="1.5"/><path d="M13.6 13.6L18.5 18.4" stroke="#A3A3A3" stroke-width="2.6"/></svg>
<div class="t" style="left:1201px;top:10px;font-size:15.75px;color:#A0A0A0;letter-spacing:-0.12px">Поиск Ctrl+Shift+F</div>
<svg class="a" style="left:1552px;top:0px" width="80" height="37" viewBox="0 0 80 37"><circle cx="20.5" cy="18.35" r="16.45" fill="#07944A"/><circle cx="15.3" cy="11.3" r="1.25" fill="#fff"/><path d="M14.3 15.6Q14.4 12.9 17.2 12.4Q20.2 11.9 22.2 14.2Q24.4 16.7 30 17.7L16.3 27.8Q15.6 23 14.7 19.2Q14.2 17.2 14.3 15.6Z" fill="#fff"/><path d="M19.2 29.6L24.8 25.4Q24.4 29.4 19.2 29.6Z" fill="#fff"/><path d="M54.6 15.2A8.9 8.9 0 1 1 54.65 22.7" fill="none" stroke="#333" stroke-width="1.4"/><path d="M62.4 13.3V19.2L65.8 21.8" fill="none" stroke="#333" stroke-width="1.4"/><path d="M51.8 13.9H58.2L55 17.9Z" fill="#333"/></svg>
<svg class="a" style="left:1644px;top:7px" width="24" height="23" viewBox="0 0 24 23"><path d="M12 2.3L14.3 9.1H21.4L15.7 13.3L17.8 20.3L12 16L6.2 20.3L8.3 13.3L2.6 9.1H9.7Z" fill="none" stroke="#333" stroke-width="1.25" stroke-linejoin="miter"/></svg>
<div class="t" style="left:1682px;top:10px;font-size:14.5px;color:#333">rdvsupport</div>
<svg class="a" style="left:1765px;top:10px" width="20" height="20" viewBox="0 0 20 20"><path d="M1 2.2H19M1 8.5H19" stroke="#333" stroke-width="1.3"/><path d="M6.6 14H13.4L10 18Z" fill="#333"/></svg>
<div class="a" style="left:1812px;top:23px;width:11px;height:1px;background:#333"></div>
<svg class="a" style="left:1852px;top:12px" width="16" height="14" viewBox="0 0 16 14"><rect x="2.5" y="3.8" width="8.8" height="8.8" fill="none" stroke="#333" stroke-width="1.2"/><path d="M4.5 3.6V1.6H13.5V10.4H11.5" fill="none" stroke="#333" stroke-width="1.2"/></svg>
<svg class="a" style="left:1894px;top:11px" width="14" height="14" viewBox="0 0 14 14"><path d="M1 1L13 13M13 1L1 13" stroke="#333" stroke-width="1.2"/></svg>
<!-- /ICONS -->
</body></html>
